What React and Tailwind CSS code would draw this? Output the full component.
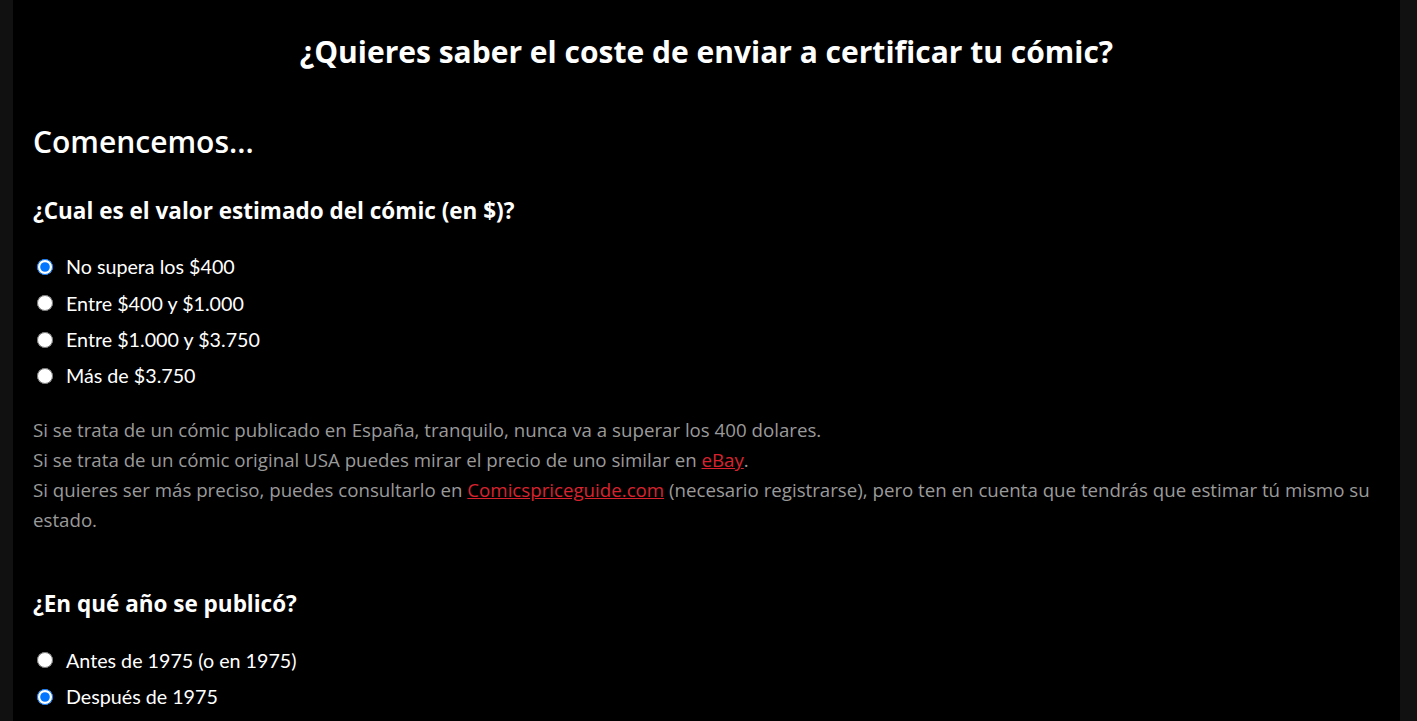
import React from "react";

const Option = ({ name, label, checked }) => (
  <label className="flex items-center gap-[13px] h-[36.3px] text-white text-[19.7px] font-['Lato',sans-serif]">
    <input
      type="radio"
      name={name}
      defaultChecked={checked}
      className="w-[16px] h-[16px] m-0 ml-[4px] accent-[#0075ff]"
    />
    <span>{label}</span>
  </label>
);

export default function App() {
  return (
    <div className="min-h-screen bg-[#111111] font-['Open_Sans',sans-serif]">
      <div className="ml-[13px] mr-[17px] bg-black min-h-screen px-[20px]">
        <h1 className="pt-[30px] text-center text-white text-[30px] font-bold leading-[44px]">
          ¿Quieres saber el coste de enviar a certificar tu cómic?
        </h1>

        <h2 className="mt-[48px] text-white text-[30px] font-semibold leading-[40px]">
          Comencemos...
        </h2>

        <h3 className="mt-[34px] text-white text-[22.5px] font-bold leading-[30px]">
          ¿Cual es el valor estimado del cómic (en $)?
        </h3>

        <div className="mt-[23px] flex flex-col">
          <Option name="valor" label="No supera los $400" checked />
          <Option name="valor" label="Entre $400 y $1.000" />
          <Option name="valor" label="Entre $1.000 y $3.750" />
          <Option name="valor" label="Más de $3.750" />
        </div>

        <p className="mt-[21px] text-[#9a9a9a] text-[18.7px] leading-[30px]">
          Si se trata de un cómic publicado en España, tranquilo, nunca va a superar los 400 dolares.
          <br />
          Si se trata de un cómic original USA puedes mirar el precio de uno similar en{" "}
          <a href="#" className="text-[#d8232f] underline">eBay</a>.
          <br />
          Si quieres ser más preciso, puedes consultarlo en{" "}
          <a href="#" className="text-[#d8232f] underline">Comicspriceguide.com</a>{" "}
          (necesario registrarse), pero ten en cuenta que tendrás que estimar tú mismo su estado.
        </p>

        <h3 className="mt-[54px] text-white text-[22.5px] font-bold leading-[30px]">
          ¿En qué año se publicó?
        </h3>

        <div className="mt-[23px] flex flex-col pb-[40px]">
          <Option name="anio" label="Antes de 1975 (o en 1975)" />
          <Option name="anio" label="Después de 1975" checked />
        </div>
      </div>
    </div>
  );
}
